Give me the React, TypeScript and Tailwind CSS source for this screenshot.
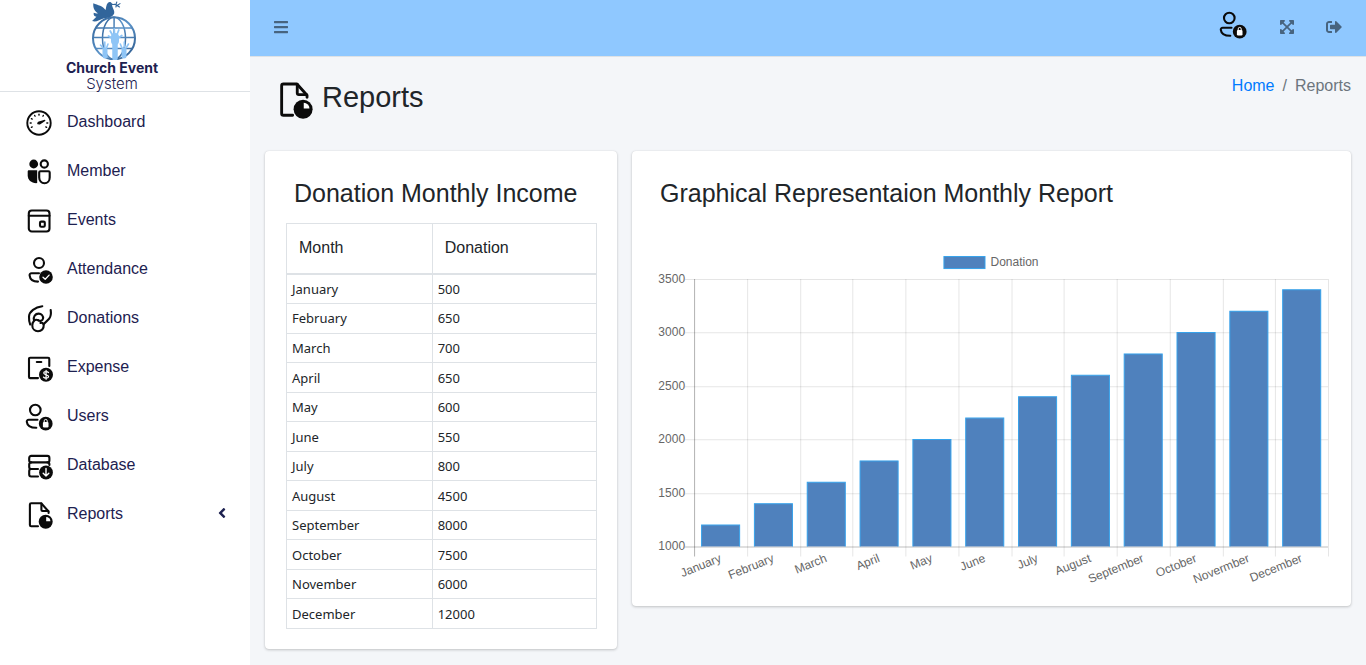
import type { ReactNode } from 'react'
import { FaAngleLeft, FaBars, FaExpandArrowsAlt, FaSignOutAlt } from 'react-icons/fa'

interface NavItem {
  label: string
  icon: ReactNode
  hasChildren?: boolean
}

const donations = [
  { month: 'January', amount: 500 },
  { month: 'February', amount: 650 },
  { month: 'March', amount: 700 },
  { month: 'April', amount: 650 },
  { month: 'May', amount: 600 },
  { month: 'June', amount: 550 },
  { month: 'July', amount: 800 },
  { month: 'August', amount: 4500 },
  { month: 'September', amount: 8000 },
  { month: 'October', amount: 7500 },
  { month: 'November', amount: 6000 },
  { month: 'December', amount: 12000 },
]

const chartData = [
  { label: 'January', value: 1200 },
  { label: 'February', value: 1400 },
  { label: 'March', value: 1600 },
  { label: 'April', value: 1800 },
  { label: 'May', value: 2000 },
  { label: 'June', value: 2200 },
  { label: 'July', value: 2400 },
  { label: 'August', value: 2600 },
  { label: 'September', value: 2800 },
  { label: 'October', value: 3000 },
  { label: 'Novermber', value: 3200 },
  { label: 'December', value: 3400 },
]

// All the line icons share a 28x28 grid
function Icon({ children, className = 'size-7' }: { children: ReactNode; className?: string }) {
  return (
    <svg
      viewBox="0 0 28 28"
      className={`shrink-0 ${className}`}
      fill="none"
      stroke="#0b0b0b"
      strokeWidth="2.1"
      strokeLinecap="round"
      strokeLinejoin="round"
      aria-hidden="true"
    >
      {children}
    </svg>
  )
}

function DashboardIcon() {
  const ticks = [150, 180, 210, 240, 270, 300, 0, 30]
  return (
    <Icon>
      <circle cx="14" cy="14" r="11.7" strokeWidth="1.9" />
      {ticks.map((deg) => (
        <path key={deg} d="M21.8 14h1" strokeWidth="1.3" transform={`rotate(${deg} 14 14)`} />
      ))}
      <path d="M19.8 11.4 14.6 15 12.8 14.6 13.3 13.3Z" fill="#0b0b0b" strokeWidth="1.2" />
    </Icon>
  )
}

function MemberIcon() {
  return (
    <Icon>
      <circle cx="8.7" cy="6" r="4.4" fill="#0b0b0b" stroke="none" />
      <circle cx="19.3" cy="6" r="3.6" />
      <path d="M4 12.3h8.2v12.8C6.5 25.5 2.7 22 2.7 17.5v-3.900c0-.8.5-1.300 1.300-1.300Z" fill="#0b0b0b" stroke="none" />
      <path d="M15.500 13.200h7.900c.8 0 1.300.5 1.300 1.300v5c0 3.300-2.200 5.800-5.200 5.800s-5.300-2.500-5.300-5.800v-5c0-.8.5-1.300 1.300-1.300Z" />
    </Icon>
  )
}

function EventsIcon() {
  return (
    <Icon>
      <rect x="3.8" y="3.5" width="20.7" height="21" rx="3" />
      <path d="M3.800 8.700h20.700" />
      <rect x="15" y="14.6" width="4.8" height="5.2" rx="1.2" />
    </Icon>
  )
}

function AttendanceIcon() {
  return (
    <Icon>
      <circle cx="14" cy="7" r="5" />
      <path d="M14 17.300H6.500c-1.300 0-2 .8-1.900 2 .4 3.700 3.500 6.300 8.400 6.300" />
      <circle cx="21" cy="21" r="6.8" fill="#0b0b0b" stroke="none" />
      <path d="m18 21.200 2.200 2.100 3.900-4.200" stroke="#fff" strokeWidth="1.3" />
    </Icon>
  )
}

function DonationsIcon() {
  return (
    <Icon>
      <path d="M17.300 1.200C10 2.200 4.200 6.500 4 11.500c-.1 3 0 5.500 1.200 8" />
      <path d="M9 15.500C8 11.500 10.300 8.600 13.600 8.600c2.900 0 4.900 2.300 4.400 5-.4 2.300-2.900 2.700-4.700 1.700" />
      <path d="M13.300 15.300C9.500 13.500 7.300 17 7.300 20.500c0 3.300 2.500 5.700 5.700 5.700 3.500 0 6-2.700 5.700-6-.2-2.300-1.900-2.700-3.300-2.200" />
      <path d="M25.700 5c.5 3.500.1 6.500-1.500 8.700-1.700 2.300-4 3.200-5.500 5.500" />
    </Icon>
  )
}

function ExpenseIcon() {
  return (
    <Icon>
      <path d="M24.300 12V4.900c0-.8-.4-1.200-1.200-1.200H5.200c-.8 0-1.200.4-1.200 1.200v18c0 .8.4 1.200 1.200 1.200H13" />
      <path d="M11.800 8h4.500" />
      <circle cx="21" cy="20.8" r="7" fill="#0b0b0b" stroke="none" />
      <path d="M23.500 18.600c-.8-1.300-4.800-1.400-4.800.5 0 2.100 4.900 1.300 4.900 3.500 0 2-4.100 2-5.100.5M21.100 16.300v9" stroke="#fff" strokeWidth="1.2" />
    </Icon>
  )
}

function UsersIcon({ className }: { className?: string }) {
  return (
    <Icon className={className}>
      <circle cx="10.3" cy="7" r="5.3" />
      <path d="M12.500 16.800H3.700c-1.300 0-2 .8-1.900 2 .4 3.500 3.600 5.900 9.500 5.900" />
      <circle cx="20.7" cy="20.7" r="6.9" fill="#0b0b0b" stroke="none" />
      <rect x="17.900" y="18.900" width="5.600" height="5.600" rx="1.200" fill="#fff" stroke="none" />
      <path d="M19.200 19.300v-1.400a1.500 1.500 0 0 1 3 0v1.400" stroke="#fff" strokeWidth="1" />
    </Icon>
  )
}

function DatabaseIcon() {
  return (
    <Icon>
      <rect x="4.2" y="3.9" width="20.2" height="6.5" rx="2" />
      <path d="M6.200 10.400c-1.300 0-2 .7-2 2V15c0 1.300.7 2 2 2H13M22.400 10.400c1.300 0 2 .7 2 2v.6" />
      <path d="M6.200 17c-1.300 0-2 .7-2 2v3.500c0 1.300.7 2 2 2H13" />
      <circle cx="21" cy="20.5" r="6.9" fill="#0b0b0b" stroke="none" />
      <path d="M21 16.500v7.500M18.200 21.300l2.800 2.800 2.800-2.800" stroke="#fff" strokeWidth="1.4" />
    </Icon>
  )
}

function ReportsIcon({ className }: { className?: string }) {
  return (
    <Icon className={className}>
      <path d="M13 25.200H6.200c-.8 0-1.300-.5-1.300-1.300V3.500c0-.8.5-1.300 1.300-1.300h10l7.400 8.300v1.500" />
      <path d="M16.400 2.500v6.300c0 .8.4 1.200 1.200 1.200h5.600" />
      <circle cx="20.7" cy="20.8" r="7" fill="#0b0b0b" stroke="none" />
      <path d="M21.200 16.100v4.200h4.200a4.200 4.200 0 0 0-4.200-4.200Z" fill="#fff" stroke="none" />
    </Icon>
  )
}

const navItems: NavItem[] = [
  { label: 'Dashboard', icon: <DashboardIcon /> },
  { label: 'Member', icon: <MemberIcon /> },
  { label: 'Events', icon: <EventsIcon /> },
  { label: 'Attendance', icon: <AttendanceIcon /> },
  { label: 'Donations', icon: <DonationsIcon /> },
  { label: 'Expense', icon: <ExpenseIcon /> },
  { label: 'Users', icon: <UsersIcon /> },
  { label: 'Database', icon: <DatabaseIcon /> },
  { label: 'Reports', icon: <ReportsIcon />, hasChildren: true },
]

function LogoMark() {
  return (
    <svg viewBox="0 0 48 60" className="h-[60px] w-12" fill="none" aria-hidden="true">
      <defs>
        <linearGradient id="globe" x1="0" y1="0" x2="1" y2="1">
          <stop offset="0" stopColor="#2f6096" />
          <stop offset="0.5" stopColor="#5b93c8" />
          <stop offset="1" stopColor="#2b5789" />
        </linearGradient>
      </defs>
      <g stroke="url(#globe)" strokeWidth="1.5">
        <circle cx="24" cy="38.3" r="21" strokeWidth="2" />
        <ellipse cx="24" cy="38.3" rx="11.5" ry="21" />
        <path d="M24.100 17.500 24 59M6 28h36M3 37.500h42M6 48.500h36" />
      </g>
      {/* raised hands */}
      <g stroke="#8fc5f6" strokeLinecap="round">
        <path d="M25 58V41" strokeWidth="5.5" />
        <path d="M25 41v-4" strokeWidth="8" />
        <path d="m22.500 35-2.300-4M24.500 34l-.3-5M27 34.500l1.800-4.500M28.300 38l3.500-2.500M21.500 38l-3-2" strokeWidth="1.8" />
        <path d="M15 56v-6" strokeWidth="5" />
        <path d="m13 48-2.500-3M14.800 47v-5M16.500 48l1.500-4" strokeWidth="1.6" />
        <path d="M34 56v-6" strokeWidth="5" />
        <path d="m32 48-1.700-4M34.300 47v-5M36 48l2.500-4" strokeWidth="1.6" />
      </g>
      {/* dove with olive branch */}
      <path
        d="M3.300 3.200c4.700 2 9.500 2.700 12.300 6.800.5-2.300.6-5.500 2.400-7.300 1.400-1.300 3.300-.7 4 .8l1.900 1.100-1.900.7c.7 3.500 4.300 7.200.8 10.300-3.300 2.900-7.400 2.200-10.700 3.400-3.400 1-5.600 3.500-10 2.100l4.300-4.300C4 16.500 3.400 14.600 3.700 12.700c2 .8 3.100.8 4.600.6-3.400-1.500-5.500-5.300-5-10.100Z"
        fill="#31659b"
      />
      <path d="M23.500 4.500c2.300-.9 3.700 1.400 6 2.500M26 4.300l.8-2.300M27.500 5.300l2.500-1.700M26.500 5l-.6 2" stroke="#31659b" strokeWidth="1.1" strokeLinecap="round" />
    </svg>
  )
}

function Sidebar() {
  return (
    <aside className="w-[250px] shrink-0 bg-white">
      <a href="#" className="flex h-[92px] flex-col items-center border-b border-[#dee2e6] text-[#1d2150]">
        <span className="flex flex-col items-center pr-[26px]">
          <span className="ml-1 block">
            <LogoMark />
          </span>
          <span className="block font-['Inter',sans-serif] text-sm leading-4 font-bold">Church Event</span>
          <span className="block font-['Inter',sans-serif] text-[15px] leading-4 font-light">System</span>
        </span>
      </a>
      <nav className="pt-[6px]">
        <ul>
          {navItems.map((item) => (
            <li key={item.label}>
              <a href="#" className="flex h-[49px] items-center pr-5 pl-[25px] text-[#1d2150]">
                {item.icon}
                <span className="ml-[14px] flex-1 pb-0.5">{item.label}</span>
                {item.hasChildren && (
                  <span className="pb-1">
                    <FaAngleLeft className="size-4" />
                  </span>
                )}
              </a>
            </li>
          ))}
        </ul>
      </nav>
    </aside>
  )
}

function Topbar() {
  return (
    <header className="flex h-[57px] items-center justify-between border-b border-[#dee2e6] bg-[#8fc8ff] pr-6 pb-0.5 pl-[23px] text-black/50">
      <button type="button" aria-label="Toggle menu">
        <FaBars className="size-4" />
      </button>
      <div className="flex items-center">
        <button type="button" aria-label="Account" className="pb-1">
          <UsersIcon className="size-7" />
        </button>
        <button type="button" aria-label="Full screen" className="ml-8">
          <FaExpandArrowsAlt className="size-4" />
        </button>
        <button type="button" aria-label="Sign out" className="ml-[31px]">
          <FaSignOutAlt className="size-4" />
        </button>
      </div>
    </header>
  )
}

function DonationTable() {
  return (
    <section className="rounded bg-white p-5 pl-[21px] shadow-[0_0_1px_rgba(0,0,0,.13),0_1px_3px_rgba(0,0,0,.2)]">
      <h2 className="mb-2 pl-2 text-[25px] leading-[44px]">Donation Monthly Income</h2>
      <table className="h-[406px] w-full border-collapse border border-[#dee2e6] text-left">
        <thead>
          <tr className="h-[50px] border-b-2 border-[#dee2e6]">
            <th className="w-[47%] border-r border-[#dee2e6] px-3 font-normal">Month</th>
            <th className="px-3 font-normal">Donation</th>
          </tr>
        </thead>
        <tbody className="font-['Noto_Sans',sans-serif] text-[13px] leading-5">
          {donations.map((row) => (
            <tr key={row.month} className="border-b border-[#dee2e6]">
              <td className="border-r border-[#dee2e6] px-[5px]">{row.month}</td>
              <td className="px-[5px]">{row.amount}</td>
            </tr>
          ))}
        </tbody>
      </table>
    </section>
  )
}

function BarChart() {
  const left = 42
  const right = 675
  const top = 43
  const bottom = 310
  const min = 1000
  const max = 3500
  const band = (right - left) / chartData.length
  const toY = (value: number) => bottom - ((value - min) / (max - min)) * (bottom - top)

  return (
    <svg viewBox="0 0 678 349" className="block w-full" fontSize="12" fill="#666" role="img" aria-label="Monthly donation chart">
      <rect x="291.5" y="20.5" width="41" height="12" fill="#4f81bd" stroke="#36a2eb" />
      <text x="338" y="30">Donation</text>

      {[3500, 3000, 2500, 2000, 1500, 1000].map((value) => {
        const y = Math.round(toY(value)) + 0.5
        return (
          <g key={value}>
            <line x1={left - 9} x2={right} y1={y} y2={y} stroke="#000" strokeOpacity={value === min ? 0.25 : 0.1} />
            <text x="33" y={y + 3} textAnchor="end">{value}</text>
          </g>
        )
      })}

      {Array.from({ length: chartData.length + 1 }).map((_, i) => {
        const x = Math.round(left + band * i) + 0.5
        return <line key={i} x1={x} x2={x} y1={top} y2={bottom + 10} stroke="#000" strokeOpacity={i === 0 ? 0.3 : 0.1} />
      })}

      {chartData.map((item, i) => {
        const x = left + band * i + 7.5
        const y = toY(item.value)
        const labelX = left + band * (i + 0.5)
        return (
          <g key={item.label}>
            <rect x={x} y={y} width="38" height={bottom - y} fill="#4f81bd" />
            <path d={`M${x} ${bottom}V${y}h38V${bottom}`} fill="none" stroke="#36a2eb" />
            <text x={labelX} y="325" textAnchor="end" transform={`rotate(-22 ${labelX} 321)`}>
              {item.label}
            </text>
          </g>
        )
      })}
    </svg>
  )
}

export default function App() {
  return (
    <div className="flex min-h-screen bg-[#f4f6f9] font-['Liberation_Sans',Arial,sans-serif] text-base text-[#212529]">
      <Sidebar />
      <div className="min-w-0 flex-1">
        <Topbar />
        <main className="px-[15px] pb-[15px]">
          <div className="flex h-[94px] items-start justify-between">
            <h1 className="flex items-center pt-[21px] pl-[10px] text-[29px] leading-[38px]">
              <ReportsIcon className="size-[38px]" />
              <span className="ml-[9px] pb-1.5">Reports</span>
            </h1>
            <nav aria-label="Breadcrumb" className="pt-[17px]">
              <ol className="flex gap-2 text-[#6c757d]">
                <li>
                  <a href="#" className="text-[#007bff]">Home</a>
                </li>
                <li aria-hidden="true">/</li>
                <li>Reports</li>
              </ol>
            </nav>
          </div>
          <div className="grid grid-cols-3 items-start gap-[15px]">
            <DonationTable />
            <section className="col-span-2 rounded bg-white p-5 shadow-[0_0_1px_rgba(0,0,0,.13),0_1px_3px_rgba(0,0,0,.2)]">
              <h2 className="mb-[21px] pl-2 text-[25px] leading-[44px]">Graphical Representaion Monthly Report</h2>
              <BarChart />
            </section>
          </div>
        </main>
      </div>
    </div>
  )
}
